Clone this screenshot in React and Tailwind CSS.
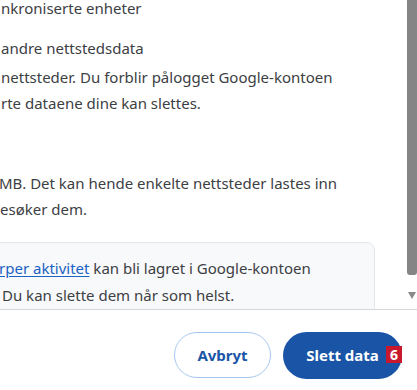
import React from 'react';

const font = { fontFamily: '"Noto Sans", "Open Sans", Arial, sans-serif' };

const Line = ({ children, className = '' }) => (
    <div className={`h-[26px] leading-[26px] whitespace-nowrap ${className}`}>{children}</div>
);

export default function App() {
    return (
        <div className="w-[417px] h-[390px] bg-white overflow-hidden flex flex-col text-[15px] text-[#3c4043]" style={font}>
            {/* rullefelt med innhold */}
            <div className="h-[310px] flex border-b border-[#d6d6d6]">
                <div className="flex-1 overflow-hidden pl-px">
                    <Line className="-mt-[5px]">nkroniserte enheter</Line>

                    <Line className="mt-[14px]">andre nettstedsdata</Line>
                    <div className="mt-[3px]">
                        <Line>nettsteder. Du forblir pålogget Google-kontoen</Line>
                        <Line>rte dataene dine kan slettes.</Line>
                    </div>

                    <Line className="mt-[25px]">&nbsp;</Line>
                    <div className="mt-[3px]">
                        <Line className="-ml-[2px]">MB. Det kan hende enkelte nettsteder lastes inn</Line>
                        <Line className="-ml-px">esøker dem.</Line>
                    </div>

                    <div className="mt-[20px] -ml-[10px] w-[384px] bg-[#f8f9fb] border border-[#e3e6ea] rounded-[8px] pt-[12px] pb-[10px]">
                        <Line className="pl-[7px]">
                            <span className="text-[#1a62c4] underline underline-offset-2">rper aktivitet</span> kan bli lagret i Google-kontoen
                        </Line>
                        <Line className="pl-[10px] mt-px">Du kan slette dem når som helst.</Line>
                    </div>
                </div>

                {/* rullefelt */}
                <div className="w-[11px] flex flex-col items-end">
                    <div className="w-[10px] h-[275px] bg-[#858585] rounded-b-[3px]" />
                    <div className="mt-[17px] mr-[1px] w-0 h-0 border-l-[4px] border-r-[4px] border-t-[7px] border-l-transparent border-r-transparent border-t-[#8a8a8a]" />
                </div>
            </div>

            {/* knapper */}
            <div className="flex justify-end gap-[12px] pt-[22px] pr-[15px]">
                <button className="w-[97px] h-[46px] rounded-full border border-[#a8c7f0] bg-white text-[#1a56a8] font-bold text-[15px]">
                    Avbryt
                </button>
                <div className="relative">
                    <button className="w-[119px] h-[47px] rounded-full bg-[#1a54a6] text-white font-bold text-[15px]">
                        Slett data
                    </button>
                    <span className="absolute left-[103px] top-[14px] w-[16px] h-[17px] bg-[#c8182e] text-white font-bold text-[14px] leading-[17px] text-center">
                        6
                    </span>
                </div>
            </div>
        </div>
    );
}
